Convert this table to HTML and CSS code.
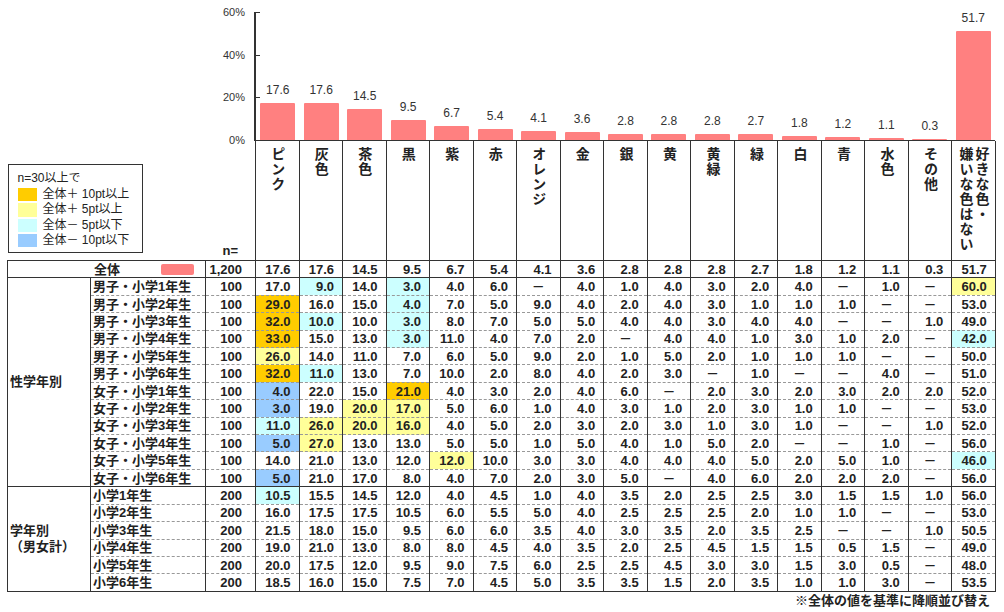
FILE: index.html
```html
<!DOCTYPE html>
<html lang="ja">
<head>
<meta charset="utf-8">
<title>好きな色</title>
<link rel="stylesheet" href="styles.css">
</head>
<body>
<div class="chart">
  <div class="yaxis"><span>60%</span><span>40%</span><span>20%</span><span>0%</span></div>
  <div class="plot">
    <div class="barcol"><span class="val">17.6</span><span class="bar" style="height:37.5px"></span></div>
    <div class="barcol"><span class="val">17.6</span><span class="bar" style="height:37.5px"></span></div>
    <div class="barcol"><span class="val">14.5</span><span class="bar" style="height:30.9px"></span></div>
    <div class="barcol"><span class="val">9.5</span><span class="bar" style="height:20.3px"></span></div>
    <div class="barcol"><span class="val">6.7</span><span class="bar" style="height:14.3px"></span></div>
    <div class="barcol"><span class="val">5.4</span><span class="bar" style="height:11.5px"></span></div>
    <div class="barcol"><span class="val">4.1</span><span class="bar" style="height:8.7px"></span></div>
    <div class="barcol"><span class="val">3.6</span><span class="bar" style="height:7.7px"></span></div>
    <div class="barcol"><span class="val">2.8</span><span class="bar" style="height:6px"></span></div>
    <div class="barcol"><span class="val">2.8</span><span class="bar" style="height:6px"></span></div>
    <div class="barcol"><span class="val">2.8</span><span class="bar" style="height:6px"></span></div>
    <div class="barcol"><span class="val">2.7</span><span class="bar" style="height:5.8px"></span></div>
    <div class="barcol"><span class="val">1.8</span><span class="bar" style="height:3.8px"></span></div>
    <div class="barcol"><span class="val">1.2</span><span class="bar" style="height:2.6px"></span></div>
    <div class="barcol"><span class="val">1.1</span><span class="bar" style="height:2.3px"></span></div>
    <div class="barcol"><span class="val">0.3</span><span class="bar" style="height:1px"></span></div>
    <div class="barcol"><span class="val">51.7</span><span class="bar" style="height:110.3px"></span></div>
  </div>
</div>

<table class="tbl">
  <colgroup>
    <col class="c-grp"><col class="c-lbl"><col class="c-n">
    <col class="c-d"><col class="c-d"><col class="c-d"><col class="c-d"><col class="c-d"><col class="c-d"><col class="c-d"><col class="c-d"><col class="c-d"><col class="c-d"><col class="c-d"><col class="c-d"><col class="c-d"><col class="c-d"><col class="c-d"><col class="c-d"><col class="c-d">
  </colgroup>
  <thead>
    <tr class="head">
      <th class="hcorner" colspan="3">
        <div class="hc">
          <div class="legend">
            <div class="lg-title">n=30以上で</div>
            <div class="lg-item"><span class="sw g"></span>全体＋ 10pt以上</div>
            <div class="lg-item"><span class="sw y"></span>全体＋ 5pt以上</div>
            <div class="lg-item"><span class="sw c"></span>全体－ 5pt以下</div>
            <div class="lg-item"><span class="sw b"></span>全体－ 10pt以下</div>
          </div>
          <span class="neq">n=</span>
        </div>
      </th>
      <th class="hcol"><span class="vl">ピンク</span></th>
      <th class="hcol"><span class="vl">灰色</span></th>
      <th class="hcol"><span class="vl">茶色</span></th>
      <th class="hcol"><span class="vl">黒</span></th>
      <th class="hcol"><span class="vl">紫</span></th>
      <th class="hcol"><span class="vl">赤</span></th>
      <th class="hcol"><span class="vl">オレンジ</span></th>
      <th class="hcol"><span class="vl">金</span></th>
      <th class="hcol"><span class="vl">銀</span></th>
      <th class="hcol"><span class="vl">黄</span></th>
      <th class="hcol"><span class="vl">黄緑</span></th>
      <th class="hcol"><span class="vl">緑</span></th>
      <th class="hcol"><span class="vl">白</span></th>
      <th class="hcol"><span class="vl">青</span></th>
      <th class="hcol"><span class="vl">水色</span></th>
      <th class="hcol"><span class="vl">その他</span></th>
      <th class="hcol"><span class="vl">好きな色・<br>嫌いな色はない</span></th>
    </tr>
  </thead>
  <tbody>
    <tr class="gs total">
      <td class="tot" colspan="2">全体<span class="tsw"></span></td>
      <td class="n">1,200</td>
      <td>17.6</td><td>17.6</td><td>14.5</td><td>9.5</td><td>6.7</td><td>5.4</td><td>4.1</td><td>3.6</td><td>2.8</td><td>2.8</td><td>2.8</td><td>2.7</td><td>1.8</td><td>1.2</td><td>1.1</td><td>0.3</td><td>51.7</td>
    </tr>
    <tr class="gs">
      <td class="grp" rowspan="12">性学年別</td>
      <td class="lbl">男子・小学1年生</td><td class="n">100</td>
      <td>17.0</td><td class="c">9.0</td><td>14.0</td><td class="c">3.0</td><td>4.0</td><td>6.0</td><td class="d">－</td><td>4.0</td><td>1.0</td><td>4.0</td><td>3.0</td><td>2.0</td><td>4.0</td><td class="d">－</td><td>1.0</td><td class="d">－</td><td class="y">60.0</td>
    </tr>
    <tr>
      <td class="lbl">男子・小学2年生</td><td class="n">100</td>
      <td class="g">29.0</td><td>16.0</td><td>15.0</td><td class="c">4.0</td><td>7.0</td><td>5.0</td><td>9.0</td><td>4.0</td><td>2.0</td><td>4.0</td><td>3.0</td><td>1.0</td><td>1.0</td><td>1.0</td><td class="d">－</td><td class="d">－</td><td>53.0</td>
    </tr>
    <tr>
      <td class="lbl">男子・小学3年生</td><td class="n">100</td>
      <td class="g">32.0</td><td class="c">10.0</td><td>10.0</td><td class="c">3.0</td><td>8.0</td><td>7.0</td><td>5.0</td><td>5.0</td><td>4.0</td><td>4.0</td><td>3.0</td><td>4.0</td><td>4.0</td><td class="d">－</td><td class="d">－</td><td>1.0</td><td>49.0</td>
    </tr>
    <tr>
      <td class="lbl">男子・小学4年生</td><td class="n">100</td>
      <td class="g">33.0</td><td>15.0</td><td>13.0</td><td class="c">3.0</td><td>11.0</td><td>4.0</td><td>7.0</td><td>2.0</td><td class="d">－</td><td>4.0</td><td>4.0</td><td>1.0</td><td>3.0</td><td>1.0</td><td>2.0</td><td class="d">－</td><td class="c">42.0</td>
    </tr>
    <tr>
      <td class="lbl">男子・小学5年生</td><td class="n">100</td>
      <td class="y">26.0</td><td>14.0</td><td>11.0</td><td>7.0</td><td>6.0</td><td>5.0</td><td>9.0</td><td>2.0</td><td>1.0</td><td>5.0</td><td>2.0</td><td>1.0</td><td>1.0</td><td>1.0</td><td class="d">－</td><td class="d">－</td><td>50.0</td>
    </tr>
    <tr>
      <td class="lbl">男子・小学6年生</td><td class="n">100</td>
      <td class="g">32.0</td><td class="c">11.0</td><td>13.0</td><td>7.0</td><td>10.0</td><td>2.0</td><td>8.0</td><td>4.0</td><td>2.0</td><td>3.0</td><td class="d">－</td><td>1.0</td><td class="d">－</td><td class="d">－</td><td>4.0</td><td class="d">－</td><td>51.0</td>
    </tr>
    <tr>
      <td class="lbl">女子・小学1年生</td><td class="n">100</td>
      <td class="b">4.0</td><td>22.0</td><td>15.0</td><td class="g">21.0</td><td>4.0</td><td>3.0</td><td>2.0</td><td>4.0</td><td>6.0</td><td class="d">－</td><td>2.0</td><td>3.0</td><td>2.0</td><td>3.0</td><td>2.0</td><td>2.0</td><td>52.0</td>
    </tr>
    <tr>
      <td class="lbl">女子・小学2年生</td><td class="n">100</td>
      <td class="b">3.0</td><td>19.0</td><td class="y">20.0</td><td class="y">17.0</td><td>5.0</td><td>6.0</td><td>1.0</td><td>4.0</td><td>3.0</td><td>1.0</td><td>2.0</td><td>3.0</td><td>1.0</td><td>1.0</td><td class="d">－</td><td class="d">－</td><td>53.0</td>
    </tr>
    <tr>
      <td class="lbl">女子・小学3年生</td><td class="n">100</td>
      <td class="c">11.0</td><td class="y">26.0</td><td class="y">20.0</td><td class="y">16.0</td><td>4.0</td><td>5.0</td><td>2.0</td><td>3.0</td><td>2.0</td><td>3.0</td><td>1.0</td><td>3.0</td><td>1.0</td><td class="d">－</td><td class="d">－</td><td>1.0</td><td>52.0</td>
    </tr>
    <tr>
      <td class="lbl">女子・小学4年生</td><td class="n">100</td>
      <td class="b">5.0</td><td class="y">27.0</td><td>13.0</td><td>13.0</td><td>5.0</td><td>5.0</td><td>1.0</td><td>5.0</td><td>4.0</td><td>1.0</td><td>5.0</td><td>2.0</td><td class="d">－</td><td class="d">－</td><td>1.0</td><td class="d">－</td><td>56.0</td>
    </tr>
    <tr>
      <td class="lbl">女子・小学5年生</td><td class="n">100</td>
      <td>14.0</td><td>21.0</td><td>13.0</td><td>12.0</td><td class="y">12.0</td><td>10.0</td><td>3.0</td><td>3.0</td><td>4.0</td><td>4.0</td><td>4.0</td><td>5.0</td><td>2.0</td><td>5.0</td><td>1.0</td><td class="d">－</td><td class="c">46.0</td>
    </tr>
    <tr>
      <td class="lbl">女子・小学6年生</td><td class="n">100</td>
      <td class="b">5.0</td><td>21.0</td><td>17.0</td><td>8.0</td><td>4.0</td><td>7.0</td><td>2.0</td><td>3.0</td><td>5.0</td><td class="d">－</td><td>4.0</td><td>6.0</td><td>2.0</td><td>2.0</td><td>2.0</td><td class="d">－</td><td>56.0</td>
    </tr>
    <tr class="gs">
      <td class="grp" rowspan="6">学年別<br>（男女計）</td>
      <td class="lbl">小学1年生</td><td class="n">200</td>
      <td class="c">10.5</td><td>15.5</td><td>14.5</td><td>12.0</td><td>4.0</td><td>4.5</td><td>1.0</td><td>4.0</td><td>3.5</td><td>2.0</td><td>2.5</td><td>2.5</td><td>3.0</td><td>1.5</td><td>1.5</td><td>1.0</td><td>56.0</td>
    </tr>
    <tr>
      <td class="lbl">小学2年生</td><td class="n">200</td>
      <td>16.0</td><td>17.5</td><td>17.5</td><td>10.5</td><td>6.0</td><td>5.5</td><td>5.0</td><td>4.0</td><td>2.5</td><td>2.5</td><td>2.5</td><td>2.0</td><td>1.0</td><td>1.0</td><td class="d">－</td><td class="d">－</td><td>53.0</td>
    </tr>
    <tr>
      <td class="lbl">小学3年生</td><td class="n">200</td>
      <td>21.5</td><td>18.0</td><td>15.0</td><td>9.5</td><td>6.0</td><td>6.0</td><td>3.5</td><td>4.0</td><td>3.0</td><td>3.5</td><td>2.0</td><td>3.5</td><td>2.5</td><td class="d">－</td><td class="d">－</td><td>1.0</td><td>50.5</td>
    </tr>
    <tr>
      <td class="lbl">小学4年生</td><td class="n">200</td>
      <td>19.0</td><td>21.0</td><td>13.0</td><td>8.0</td><td>8.0</td><td>4.5</td><td>4.0</td><td>3.5</td><td>2.0</td><td>2.5</td><td>4.5</td><td>1.5</td><td>1.5</td><td>0.5</td><td>1.5</td><td class="d">－</td><td>49.0</td>
    </tr>
    <tr>
      <td class="lbl">小学5年生</td><td class="n">200</td>
      <td>20.0</td><td>17.5</td><td>12.0</td><td>9.5</td><td>9.0</td><td>7.5</td><td>6.0</td><td>2.5</td><td>2.5</td><td>4.5</td><td>3.0</td><td>3.0</td><td>1.5</td><td>3.0</td><td>0.5</td><td class="d">－</td><td>48.0</td>
    </tr>
    <tr class="end">
      <td class="lbl">小学6年生</td><td class="n">200</td>
      <td>18.5</td><td>16.0</td><td>15.0</td><td>7.5</td><td>7.0</td><td>4.5</td><td>5.0</td><td>3.5</td><td>3.5</td><td>1.5</td><td>2.0</td><td>3.5</td><td>1.0</td><td>1.0</td><td>3.0</td><td class="d">－</td><td>53.5</td>
    </tr>
  </tbody>
</table>
<div class="note">※全体の値を基準に降順並び替え</div>
</body>
</html>
```

FILE: styles.css
```css
html, body {
  margin: 0;
  padding: 0;
  background: #fff;
}
body {
  width: 1004px;
  font-family: "Liberation Sans", "Noto Sans CJK JP", sans-serif;
  color: #222;
  overflow: hidden;
}

/* ---------- chart ---------- */
.chart {
  display: flex;
  height: 141px;
}
.yaxis {
  flex: none;
  align-self: flex-start;
  box-sizing: border-box;
  width: 254px;
  height: 146px;
  padding: 6px 9px 0 0;
  display: flex;
  flex-direction: column;
  justify-content: space-between;
  align-items: flex-end;
  font-size: 11px;
  line-height: 12px;
  color: #333;
}
.plot {
  flex: none;
  box-sizing: border-box;
  width: 741px;
  height: 129px;
  margin-top: 12px;
  border-left: 2px solid #333;
  border-bottom: 1px solid #333;
  display: flex;
  align-items: stretch;
  background:
    linear-gradient(#333, #333) no-repeat 0 0 / 4px 1px,
    linear-gradient(#333, #333) no-repeat 0 42.67px / 4px 1px,
    linear-gradient(#333, #333) no-repeat 0 85.33px / 4px 1px;
}
.barcol {
  flex: 1 1 0;
  display: flex;
  flex-direction: column;
  align-items: center;
  justify-content: flex-end;
}
.val {
  font-size: 12px;
  line-height: 12px;
  margin-bottom: 7px;
  color: #333;
}
.bar {
  display: block;
  width: 35px;
  background: #ff8080;
  border-radius: 1px 1px 0 0;
}

/* ---------- table ---------- */
.tbl {
  margin-left: 7px;
  width: 988px;
  border-collapse: collapse;
  table-layout: fixed;
  font-size: 13px;
  font-weight: bold;
}
.c-grp { width: 83px; }
.c-lbl { width: 115px; }
.c-n { width: 50px; }
.c-d { width: 43.53px; }

.head th {
  height: 119px;
  padding: 0;
}
.hcorner {
  vertical-align: bottom;
  border: none;
  border-right: 1px solid #333;
}
.hc {
  display: flex;
  align-items: flex-end;
  justify-content: space-between;
}
.legend {
  box-sizing: border-box;
  width: 135px;
  height: 89px;
  margin-bottom: 7px;
  border: 1px solid #333;
  padding: 6px 0 0 9px;
  text-align: left;
  font-size: 12px;
  font-weight: normal;
  color: #222;
}
.lg-title {
  line-height: 14px;
  margin-bottom: 3px;
}
.lg-item {
  display: flex;
  align-items: center;
  height: 13.3px;
  margin-bottom: 2px;
  line-height: 13px;
  white-space: nowrap;
}
.sw {
  flex: none;
  width: 19px;
  height: 13.3px;
  margin-right: 6px;
}
.neq {
  margin: 0 17px 2px 0;
  line-height: 14px;
}
.hcol {
  vertical-align: top;
  text-align: center;
  border-left: 1px solid #333;
  border-right: 1px solid #333;
}
.vl {
  display: inline-block;
  margin-top: 6px;
  writing-mode: vertical-rl;
  font-size: 14px;
  line-height: 16px;
  letter-spacing: 1px;
  text-align: left;
  vertical-align: top;
}

.tbl td {
  height: 17.42px;
  padding: 0 8px 0 0;
  box-sizing: border-box;
  line-height: 15px;
  text-align: right;
  white-space: nowrap;
  border-width: 1px;
  border-style: dashed solid;
  border-color: #999 #333;
}
.tbl tr.gs td { border-top: 1px solid #333; }
.tbl tr.total td { border-bottom: 1px solid #333; }
.tbl tr.end td { border-bottom: 1px solid #333; }
.tbl td.grp {
  border: 1px solid #333;
  text-align: left;
  vertical-align: middle;
  padding: 0 0 0 2px;
  line-height: 16px;
}
.tbl td.lbl {
  text-align: left;
  padding: 0 0 0 2px;
}
.tbl td.tot {
  text-align: left;
  padding: 0 0 0 86px;
}
.tsw {
  display: inline-block;
  width: 33px;
  height: 11px;
  margin-left: 41px;
  vertical-align: -1px;
  background: #ff8080;
  border-radius: 2px;
}
.tbl td.n { padding-right: 13px; }
.tbl td.d {
  text-align: center;
  padding: 0;
}

.g { background: #ffcc00; }
.y { background: #ffff99; }
.c { background: #ccffff; }
.b { background: #99ccff; }

.note {
  text-align: right;
  padding-right: 14px;
  font-size: 13px;
  font-weight: bold;
  line-height: 18px;
  color: #222;
}
```
